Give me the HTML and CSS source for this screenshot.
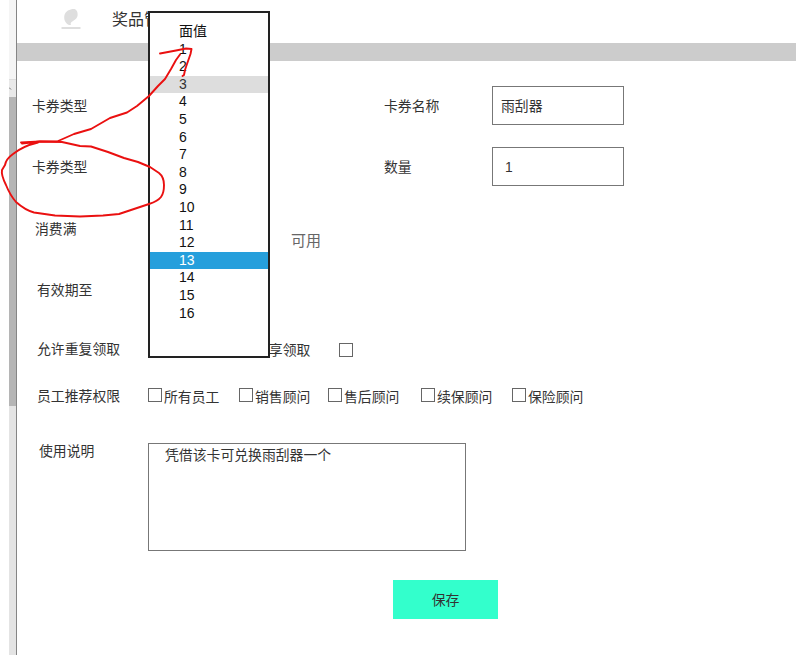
FILE: index.html
```html
<!DOCTYPE html>
<html lang="zh-CN">
<head>
<meta charset="utf-8">
<title>奖品管理</title>
<link rel="stylesheet" href="styles.css">
</head>
<body>
<div class="window">
  <aside class="scrollbar">
    <div class="track-top"></div>
    <div class="scroll-up"><svg width="4" height="6" viewBox="0 0 4 6"><path d="M0 1.500l2 2" stroke="#777" fill="none"/></svg></div>
    <div class="thumb"></div>
  </aside>
  <main class="page">
    <header class="header">
      <svg class="logo" width="20" height="22" viewBox="0 0 20 22">
        <path d="M8 17C4 15 2.500 11 3.500 7C4.500 3 9 .8 13.500 1C16.500 2 17 5.500 16.500 8C15.500 11.500 12.500 12.500 10.500 14C9.500 15 9.500 16 10 17Z" fill="#dedede"/>
        <path d="M.5 20H19.500" stroke="#dedede" stroke-width="2"/>
      </svg>
      <h1>奖品管理</h1>
    </header>
    <div class="band"></div>
    <form class="form">
      <div class="row row-type"><span class="label">卡券类型</span><span class="label second">卡券名称</span><div class="field">雨刮器</div></div>
      <div class="row row-count"><span class="label">卡券类型</span><span class="label second">数量</span><div class="field number">1</div></div>
      <div class="row row-spend"><span class="label">消费满</span><span class="usable">可用</span></div>
      <div class="row row-until"><span class="label">有效期至</span></div>
      <div class="row row-repeat"><span class="label">允许重复领取</span><span class="share">分享领取</span><i class="box"></i></div>
      <div class="row row-staff">
        <span class="label">员工推荐权限</span>
        <div class="checks">
          <label class="check"><i class="box"></i><span>所有员工</span></label>
          <label class="check"><i class="box"></i><span>销售顾问</span></label>
          <label class="check"><i class="box"></i><span>售后顾问</span></label>
          <label class="check"><i class="box"></i><span>续保顾问</span></label>
          <label class="check"><i class="box"></i><span>保险顾问</span></label>
        </div>
      </div>
      <div class="row row-notes"><span class="label">使用说明</span><div class="notes">凭借该卡可兑换雨刮器一个</div></div>
      <button class="save" type="button">保存</button>
    </form>
  </main>
  <ul class="dropdown">
    <li>面值</li><li>1</li><li>2</li><li class="hover">3</li><li>4</li><li>5</li><li>6</li><li>7</li><li>8</li><li>9</li><li>10</li><li>11</li><li>12</li><li class="selected">13</li><li>14</li><li>15</li><li>16</li>
  </ul>
  <svg class="ink" width="200" height="230" viewBox="0 0 200 230">
    <path d="M21 142.500L40 141.500L57 141.500L74 134L91 129L110 118L127 112.500L137 106L149 96L158 86L165 79L171 69L176 60L180 54.500"/>
    <path d="M160 53.500L176 50.500L186 48.500L191.500 49L190.500 54L187 64L185 70L184 75L182.500 76"/>
    <path d="M22 143.500L40 141.500L62 142L80 146L91 146.500L108 152L124 158L138 162L150 167L159 173Q164 177 164 185Q164 193 161 197Q158 201 149 204L134 209L119 214L103 215.500L80 216.500L55 215.500L34 212.500Q25 210 16 202Q10 195 6 185Q1 175 2 170L5 165Q6 159 13 154Q23 146 38 142.500"/>
  </svg>
</div>
</body>
</html>
```
FILE: styles.css
```css
* { box-sizing: border-box; }
body {
  margin: 0;
  background: #fff;
  color: #333;
  font: 13.85px/20px "Liberation Sans", "Noto Sans CJK SC", sans-serif;
}
.window { position: relative; display: flex; width: 796px; height: 655px; overflow: hidden; }
.scrollbar { width: 8px; margin-left: 9px; border-right: 1px solid #858585; background: #e4e4e4; flex: none; }
.track-top { height: 79px; background: #f5f5f5; }
.scroll-up { height: 18px; padding-top: 6px; background: #e9e9e9; border-top: 1px solid #ddd; line-height: 0; }
.thumb { height: 309px; background: #b5b5b5; }
.page { flex: 1; }
.header { display: flex; height: 43px; padding-left: 44px; }
.logo { margin-top: 8px; }
h1 { margin: 8px 0 0 31px; font-size: 16px; line-height: 24px; font-weight: 400; }
.band { height: 18px; background: #ccc; }
.form { padding-top: 25px; }
.row { display: flex; align-items: center; white-space: nowrap; }
.label { width: 111px; flex: none; }
.row-type, .row-count { height: 39px; padding-left: 15px; }
.row-count { margin-top: 22px; }
.second { width: 108px; margin-left: 241px; }
.field { width: 132px; height: 39px; padding: 9px 0 0 8px; border: 1px solid #777; }
.number { padding-left: 12px; }
.row-spend { height: 32px; margin-top: 33px; padding-left: 18px; align-items: flex-start; }
.usable { margin: 12px 0 0 145px; font-size: 15px; color: #666; }
.row-until { height: 20px; margin-top: 29px; padding-left: 20px; }
.row-repeat { height: 20px; margin-top: 39px; padding-left: 20px; }
.share { width: 84px; margin-left: 107px; padding-top: 2px; }
.box { width: 14px; height: 14px; border: 1px solid #666; flex: none; }
.row-repeat .box { margin-top: 1px; }
.row-staff { height: 20px; margin-top: 27px; padding-left: 20px; }
.checks { display: grid; grid-template-columns: 91px 89px 93px 91px 80px; }
.check { display: flex; gap: 2px; align-items: flex-start; }
.check span { padding-top: 1px; }
.check .box { margin-top: 2px; }
.row-notes { height: 108px; margin-top: 37px; padding-left: 22px; align-items: flex-start; }
.row-notes .label { width: 109px; margin-top: -2px; }
.notes { width: 318px; height: 108px; padding: 1px 0 0 16px; border: 1px solid #777; }
.save { display: block; width: 105px; height: 39px; margin: 29px 0 0 376px; padding: 0; border: 0; background: #3fc; color: #333; font: inherit; }
.dropdown { position: absolute; left: 148px; top: 11px; width: 122px; height: 347px; margin: 0; padding: 10px 0 0; border: 2px solid #222; background: #fff; list-style: none; color: #111; font-size: 14px; line-height: 17.6px; }
.dropdown li { height: 17.6px; padding-left: 29px; white-space: nowrap; }
.dropdown .hover { background: #ddd; color: #333; }
.dropdown .selected { background: #269fdc; color: #fff; }
.ink { position: absolute; left: 0; top: 0; pointer-events: none; }
.ink path { fill: none; stroke: #ea1010; stroke-width: 1.9; stroke-linejoin: round; stroke-linecap: round; }
```
